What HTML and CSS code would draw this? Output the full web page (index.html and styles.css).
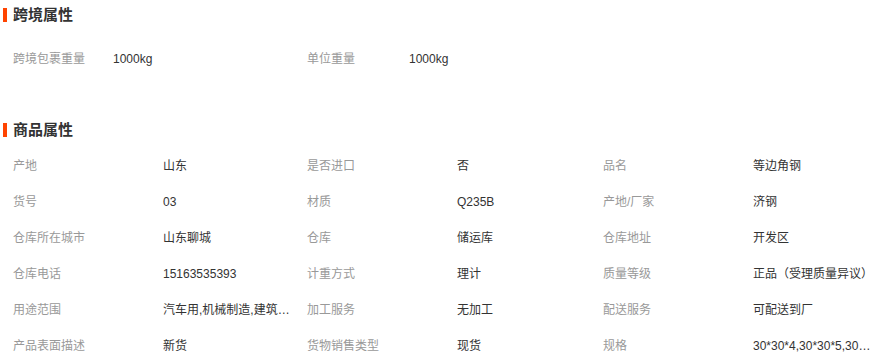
FILE: index.html
```html
<!DOCTYPE html>
<html lang="zh-CN">
<head>
<meta charset="utf-8">
<title>商品属性</title>
<link rel="stylesheet" href="styles.css">
</head>
<body>
<section class="section section-cross">
  <h2 class="section-title">跨境属性</h2>
  <div class="grid grid-cross">
    <div class="cell label">跨境包裹重量</div>
    <div class="cell value">1000kg</div>
    <div class="cell label">单位重量</div>
    <div class="cell value">1000kg</div>
  </div>
</section>
<section class="section section-goods">
  <h2 class="section-title">商品属性</h2>
  <div class="grid grid-goods">
    <div class="cell label">产地</div><div class="cell value">山东</div>
    <div class="cell label">是否进口</div><div class="cell value">否</div>
    <div class="cell label">品名</div><div class="cell value last">等边角钢</div>

    <div class="cell label">货号</div><div class="cell value">03</div>
    <div class="cell label">材质</div><div class="cell value">Q235B</div>
    <div class="cell label">产地/厂家</div><div class="cell value last">济钢</div>

    <div class="cell label">仓库所在城市</div><div class="cell value">山东聊城</div>
    <div class="cell label">仓库</div><div class="cell value">储运库</div>
    <div class="cell label">仓库地址</div><div class="cell value last">开发区</div>

    <div class="cell label">仓库电话</div><div class="cell value">15163535393</div>
    <div class="cell label">计重方式</div><div class="cell value">理计</div>
    <div class="cell label">质量等级</div><div class="cell value last">正品（受理质量异议）</div>

    <div class="cell label">用途范围</div><div class="cell value">汽车用,机械制造,建筑用,桥梁,船舶</div>
    <div class="cell label">加工服务</div><div class="cell value">无加工</div>
    <div class="cell label">配送服务</div><div class="cell value last">可配送到厂</div>

    <div class="cell label">产品表面描述</div><div class="cell value">新货</div>
    <div class="cell label">货物销售类型</div><div class="cell value">现货</div>
    <div class="cell label">规格</div><div class="cell value last">30*30*4,30*30*5,30*30*3,40*40*4</div>
  </div>
</section>
</body>
</html>
```

FILE: styles.css
```css
html, body {
  margin: 0;
  padding: 0;
  background: #ffffff;
}
body {
  width: 888px;
  font-family: "Liberation Sans", "Noto Sans CJK SC", sans-serif;
  font-size: 12px;
  color: #333333;
}
.section-cross {
  margin-bottom: 39px;
}
.section-title {
  margin: 0;
  height: 30px;
  line-height: 30px;
  font-size: 15px;
  font-weight: bold;
  color: #333333;
  display: flex;
  align-items: center;
  gap: 6px;
  padding-left: 3px;
}
.section-title::before {
  content: "";
  display: block;
  width: 4px;
  height: 14px;
  background: #ff4400;
}
.grid {
  display: grid;
}
.grid-cross {
  margin-top: 10px;
  grid-template-columns: 100px 194px 102px 1fr;
}
.grid-goods {
  margin-top: 2px;
  grid-template-columns: 150px 144px 150px 146px 150px 148px;
}
.cell {
  box-sizing: border-box;
  height: 36px;
  line-height: 34px;
  padding: 2px 2px 0 13px;
  white-space: nowrap;
  overflow: hidden;
  text-overflow: ellipsis;
  min-width: 0;
}
.label {
  color: #999999;
}
.value {
  color: #333333;
}
.value.last {
  padding-right: 14px;
}
```
